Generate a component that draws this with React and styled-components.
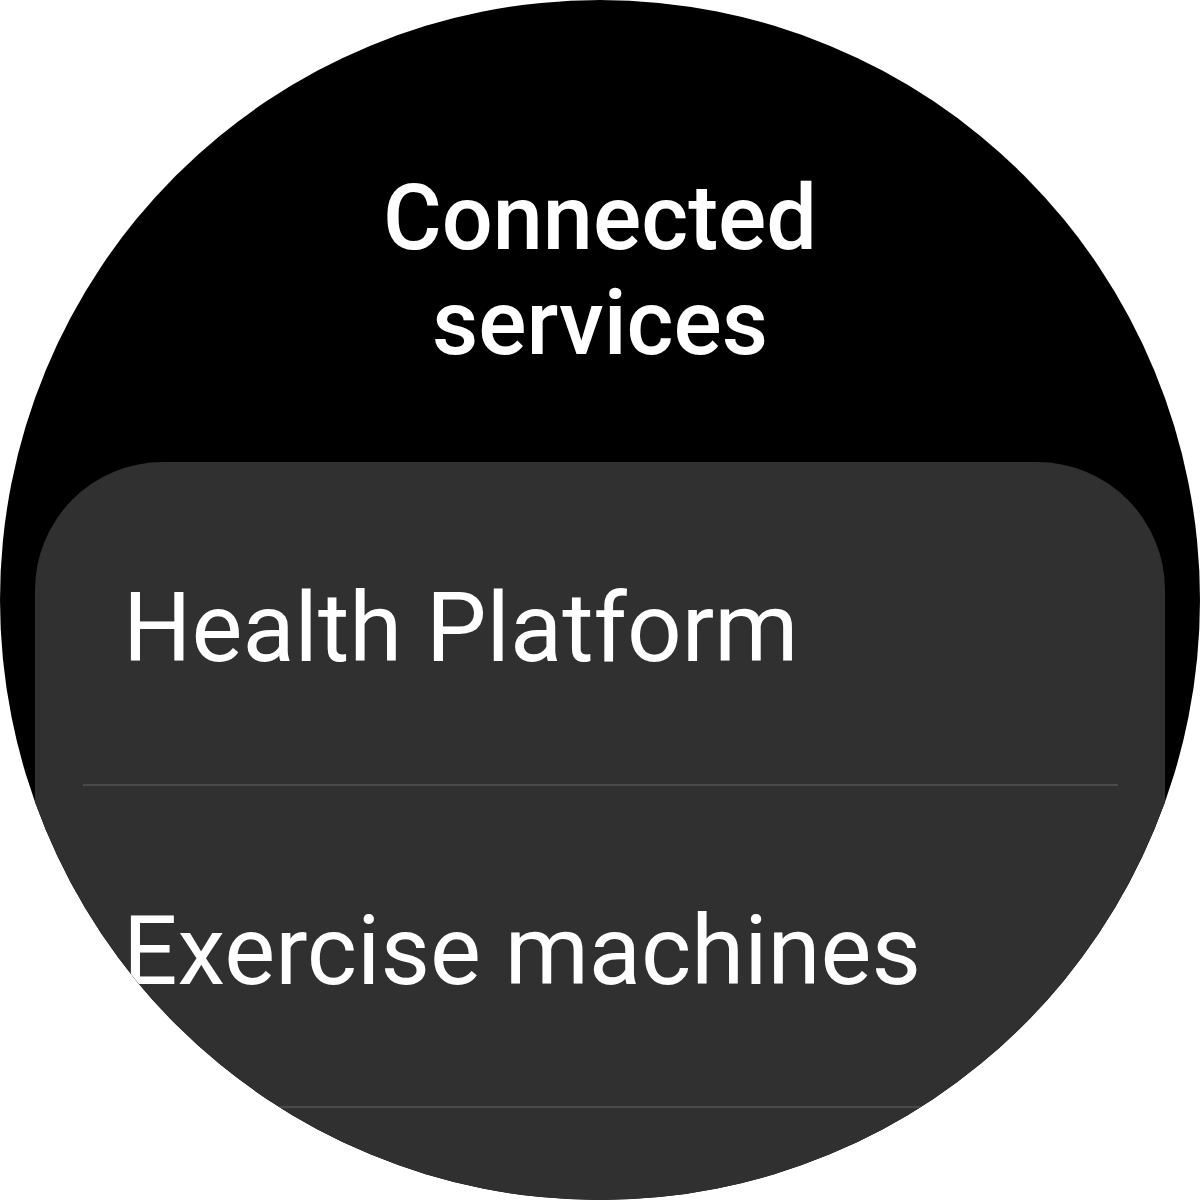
import React from "react";
import styled, { createGlobalStyle } from "styled-components";

const Global = createGlobalStyle`
  html, body {
    margin: 0;
    padding: 0;
    background: #ffffff;
  }
  body {
    font-family: Roboto, "Noto Sans", Arial, sans-serif;
  }
`;

const WatchFace = styled.div`
  width: 1200px;
  height: 1200px;
  border-radius: 50%;
  background: #000000;
  overflow: hidden;
  display: flex;
  flex-direction: column;
  align-items: stretch;
`;

const Title = styled.h1`
  margin: 166px 0 0;
  padding: 0;
  text-align: center;
  color: #ffffff;
  font-family: Roboto, Arial, sans-serif;
  font-weight: 500;
  font-size: 90px;
  line-height: 105px;
  letter-spacing: 0;
`;

const Card = styled.div`
  flex: 1;
  margin: 86px 35px 0;
  background: #303030;
  border-radius: 128px 128px 0 0;
  display: flex;
  flex-direction: column;
`;

const Row = styled.div`
  flex: none;
  height: ${(p) => (p.$first ? 324 : 322)}px;
  display: flex;
  align-items: center;
  padding: 8px 0 0 88px;
  box-sizing: border-box;
  position: relative;
  color: #ffffff;
  font-family: Roboto, Arial, sans-serif;
  font-size: 96px;
  font-weight: 400;

  &::after {
    content: "";
    position: absolute;
    left: 48px;
    right: 47px;
    bottom: 0;
    height: 2px;
    background: #4a4a4a;
  }
`;

const items = ["Health Platform", "Exercise machines"];

export default function App() {
  return (
    <>
      <Global />
      <WatchFace>
        <Title>
          Connected
          <br />
          services
        </Title>
        <Card>
          {items.map((label, i) => (
            <Row key={label} $first={i === 0}>
              {label}
            </Row>
          ))}
        </Card>
      </WatchFace>
    </>
  );
}
